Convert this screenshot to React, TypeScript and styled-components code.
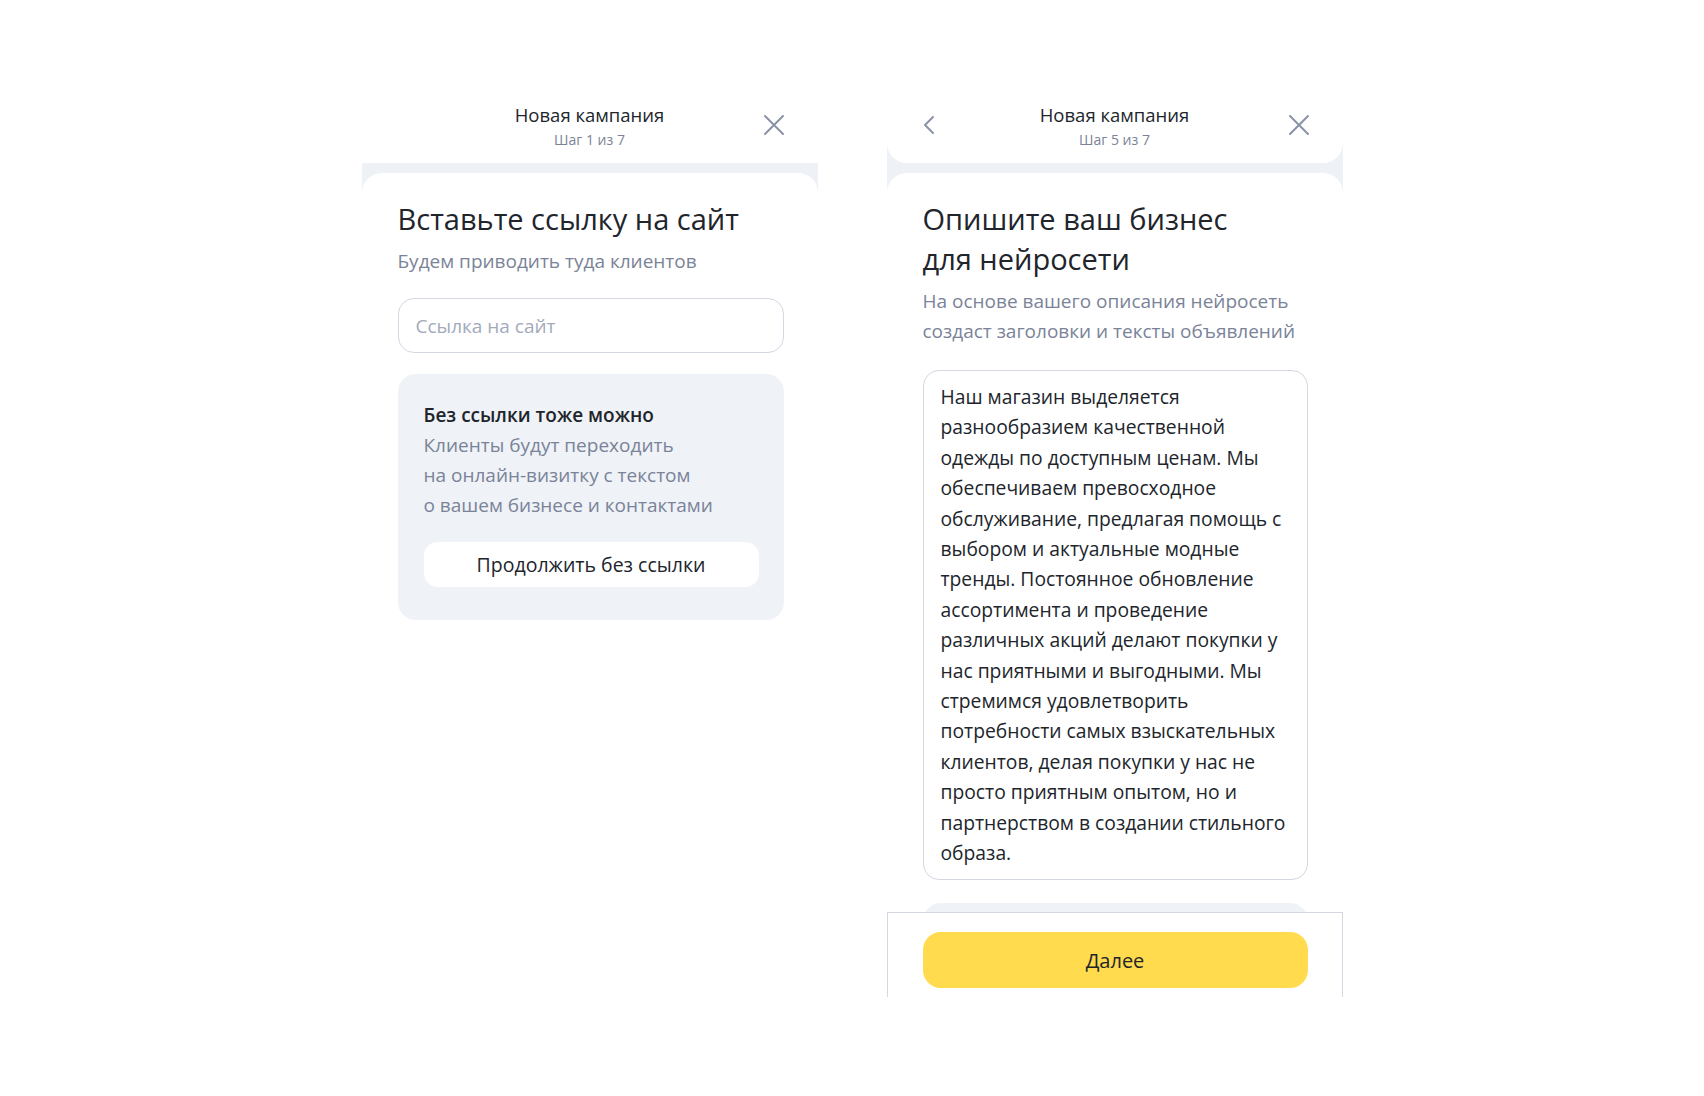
import React from 'react';
import styled, { createGlobalStyle } from 'styled-components';

const GlobalStyle = createGlobalStyle`
  html, body {
    margin: 0;
    padding: 0;
    background: #ffffff;
  }
  body {
    font-family: 'Open Sans', 'Noto Sans', sans-serif;
    color: #21252b;
  }
  * {
    box-sizing: border-box;
  }
`;

const Page = styled.div`
  display: flex;
  justify-content: center;
  align-items: flex-start;
  gap: 69px;
  padding-top: 90px;
  min-height: 1096px;
`;

const Screen = styled.div`
  width: 456px;
  display: flex;
  flex-direction: column;
  background: #eef1f6;
`;

const Header = styled.div<{ $rounded?: boolean }>`
  position: relative;
  height: 73px;
  padding-top: 14px;
  display: flex;
  flex-direction: column;
  align-items: center;
  background: #ffffff;
  border-radius: ${(p) => (p.$rounded ? '0 0 20px 20px' : '0')};
`;

const HeaderTitle = styled.div`
  font-size: 18.5px;
  line-height: 22px;
  font-weight: 500;
  color: #21252b;
`;

const HeaderStep = styled.div`
  margin-top: 5px;
  font-size: 14px;
  line-height: 18px;
  color: #7b8396;
`;

const IconButton = styled.button<{ $side: 'left' | 'right' }>`
  position: absolute;
  top: 23px;
  ${(p) => (p.$side === 'left' ? 'left: 30px;' : 'right: 32px;')}
  width: 24px;
  height: 24px;
  padding: 0;
  border: none;
  background: none;
  display: flex;
  align-items: center;
  justify-content: center;
  color: #8a92a6;
  cursor: pointer;
`;

const Card = styled.div<{ $height?: number }>`
  margin-top: 10px;
  padding: 26px 35px 0 36px;
  background: #ffffff;
  border-radius: 20px 20px 0 0;
  ${(p) => (p.$height ? `height: ${p.$height}px; overflow: hidden;` : 'min-height: 480px;')}
`;

const Heading = styled.h1`
  margin: 0;
  font-size: 29px;
  line-height: 40px;
  font-weight: 400;
  color: #21252b;
`;

const Lead = styled.p`
  margin: 7px 0 0;
  font-size: 19px;
  line-height: 30px;
  color: #7a8398;
`;

const Input = styled.input`
  display: block;
  width: 386px;
  height: 55px;
  margin-top: 22px;
  padding: 0 17px;
  border: 1px solid #d3d8e2;
  border-radius: 16px;
  font-family: inherit;
  font-size: 19px;
  color: #21252b;
  outline: none;
  &::placeholder {
    color: #a3aabb;
  }
`;

const HintBox = styled.div`
  width: 386px;
  margin-top: 21px;
  padding: 26px 25px 33px 26px;
  background: #eff2f7;
  border-radius: 18px;
`;

const HintTitle = styled.div`
  font-size: 19px;
  line-height: 30px;
  font-weight: 600;
  color: #21252b;
`;

const HintText = styled.div`
  font-size: 19px;
  line-height: 30px;
  color: #7a8398;
`;

const SoftButton = styled.button`
  display: block;
  width: 100%;
  height: 45px;
  margin-top: 22px;
  border: none;
  border-radius: 14px;
  background: #ffffff;
  font-family: inherit;
  font-size: 19.5px;
  color: #21252b;
  cursor: pointer;
`;

const TextBox = styled.div`
  width: 385px;
  height: 510px;
  margin-top: 24px;
  padding: 11px 16px 0 17px;
  border: 1px solid #d3d8e2;
  border-radius: 16px;
  font-size: 19.3px;
  line-height: 30.4px;
  color: #21252b;
`;

const TextLine = styled.div`
  white-space: nowrap;
`;

const Teaser = styled.div`
  width: 385px;
  height: 60px;
  margin-top: 23px;
  background: #eff2f7;
  border-radius: 18px;
`;

const Footer = styled.div`
  height: 85px;
  padding: 19px 35px 9px;
  background: #ffffff;
  border: 1px solid #d3d8e2;
  border-bottom: none;
`;

const PrimaryButton = styled.button`
  display: block;
  width: 385px;
  height: 56px;
  border: none;
  border-radius: 18px;
  background: #ffdb4d;
  font-family: inherit;
  font-size: 20px;
  color: #21252b;
  cursor: pointer;
`;

const CloseIcon = () => (
  <svg width="22" height="22" viewBox="0 0 22 22" fill="none">
    <path d="M2 2L20 20M20 2L2 20" stroke="currentColor" strokeWidth="2" strokeLinecap="round" />
  </svg>
);

const BackIcon = () => (
  <svg width="14" height="20" viewBox="0 0 14 20" fill="none">
    <path d="M11 2L3 10L11 18" stroke="currentColor" strokeWidth="2" strokeLinecap="round" strokeLinejoin="round" />
  </svg>
);

const description = [
  'Наш магазин выделяется',
  'разнообразием качественной',
  'одежды по доступным ценам. Мы',
  'обеспечиваем превосходное',
  'обслуживание, предлагая помощь с',
  'выбором и актуальные модные',
  'тренды. Постоянное обновление',
  'ассортимента и проведение',
  'различных акций делают покупки у',
  'нас приятными и выгодными. Мы',
  'стремимся удовлетворить',
  'потребности самых взыскательных',
  'клиентов, делая покупки у нас не',
  'просто приятным опытом, но и',
  'партнерством в создании стильного',
  'образа.',
];

export default function App() {
  return (
    <>
      <GlobalStyle />
      <Page>
        <Screen>
          <Header>
            <HeaderTitle>Новая кампания</HeaderTitle>
            <HeaderStep>Шаг 1 из 7</HeaderStep>
            <IconButton $side="right" aria-label="Закрыть">
              <CloseIcon />
            </IconButton>
          </Header>
          <Card>
            <Heading>Вставьте ссылку на сайт</Heading>
            <Lead>Будем приводить туда клиентов</Lead>
            <Input placeholder="Ссылка на сайт" />
            <HintBox>
              <HintTitle>Без ссылки тоже можно</HintTitle>
              <HintText>
                Клиенты будут переходить
                <br />
                на онлайн-визитку с текстом
                <br />
                о вашем бизнесе и контактами
              </HintText>
              <SoftButton>Продолжить без ссылки</SoftButton>
            </HintBox>
          </Card>
        </Screen>

        <Screen>
          <Header $rounded>
            <IconButton $side="left" aria-label="Назад">
              <BackIcon />
            </IconButton>
            <HeaderTitle>Новая кампания</HeaderTitle>
            <HeaderStep>Шаг 5 из 7</HeaderStep>
            <IconButton $side="right" aria-label="Закрыть">
              <CloseIcon />
            </IconButton>
          </Header>
          <Card $height={739}>
            <Heading>
              Опишите ваш бизнес
              <br />
              для нейросети
            </Heading>
            <Lead>
              На основе вашего описания нейросеть
              <br />
              создаст заголовки и тексты объявлений
            </Lead>
            <TextBox>
              {description.map((line) => (
                <TextLine key={line}>{line}</TextLine>
              ))}
            </TextBox>
            <Teaser />
          </Card>
          <Footer>
            <PrimaryButton>Далее</PrimaryButton>
          </Footer>
        </Screen>
      </Page>
    </>
  );
}
